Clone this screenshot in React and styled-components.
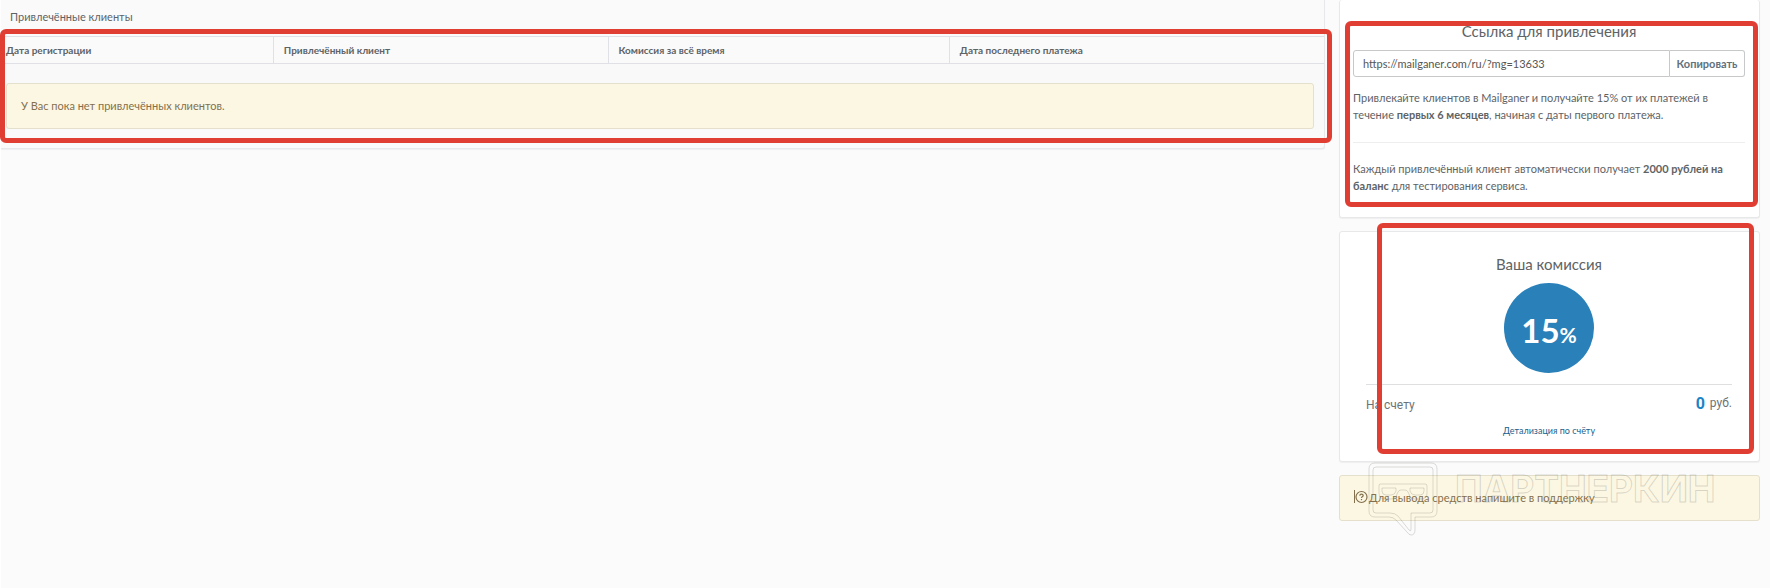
import React from 'react';
import styled, { createGlobalStyle } from 'styled-components';

const GlobalStyle = createGlobalStyle`
  * {
    box-sizing: border-box;
  }

  body {
    margin: 0;
    background: #fbfbfb;
    color: #5e6366;
    font-family: Lato, 'Noto Sans', sans-serif;
    font-size: 11px;
    line-height: 17px;
  }
`

const Page = styled.div`
  display: flex;
  align-items: flex-start;
  gap: 14px;
  min-height: 100vh;
  padding-right: 10px;
  border-left: 1px solid #ffffff;
`

const Clients = styled.section`
  position: relative;
  flex: 1;
  min-width: 0;
  padding-bottom: 19px;
  background: #fafafa;
  border: 1px solid #e7e8ec;
  border-width: 0 1px 1px 0;
  border-radius: 0 0 3px 0;
  box-shadow: 0 1px 1px #efeff1;
`

const ClientsTitle = styled.h2`
  margin: 0;
  padding: 8px 9px 11px;
  font-size: 11px;
  font-weight: 400;
  line-height: 17px;
`

const Table = styled.table`
  width: 100%;
  table-layout: fixed;
  border-collapse: separate;
  border-spacing: 0;
  border-top: 1px solid #dfe1e6;
`

const HeadCell = styled.th`
  width: ${props => props.$width};
  height: 27px;
  padding: 0 10px;
  border: 1px solid #dfe1e6;
  border-width: 0 1px 1px 0;
  font-size: 10px;
  font-weight: 700;
  line-height: 16px;
  text-align: left;
  white-space: nowrap;

  &:first-child {
    padding-left: 5px;
  }

  &:last-child {
    border-right: 0;
  }
`

const EmptyCell = styled.td`
  padding: 19px 10px 0 5px;
  background: #f9f9f9;
`

const Notice = styled.div`
  display: flex;
  align-items: center;
  gap: 1px;
  height: 46px;
  padding: 0 14px 2px;
  background: #fcf7e3;
  border: 1px solid #e4e0cb;
  border-radius: 3px;
  color: #84704c;
`

const Sidebar = styled.aside`
  position: relative;
  display: flex;
  flex-direction: column;
  gap: 13px;
  width: 421px;
`

const Card = styled.section`
  position: relative;
  padding: ${props => props.$padding};
  background: #ffffff;
  border: 1px solid #e7e8e9;
  border-top-width: ${props => (props.$cut ? 0 : 1)}px;
  border-radius: 3px;
  box-shadow: 0 1px 1px #efefef;
`

const CardTitle = styled.h3`
  margin: 0 0 8px;
  font-size: 15px;
  font-weight: 400;
  line-height: 22px;
  text-align: center;
`

const CopyRow = styled.div`
  display: flex;
  height: 27px;
  margin-bottom: 12px;
`

const LinkInput = styled.input`
  flex: 1;
  min-width: 0;
  padding: 0 9px;
  background: #ffffff;
  border: 1px solid #c6c8ca;
  border-radius: 3px 0 0 3px;
  color: #555555;
  font: inherit;
`

const CopyButton = styled.button`
  width: 75px;
  padding: 0;
  background: #ffffff;
  border: 1px solid #c6c8ca;
  border-left: 0;
  border-radius: 0 3px 3px 0;
  color: #62717c;
  font: inherit;
  font-weight: 700;
`

const Text = styled.p`
  margin: 0;
`

const Rule = styled.hr`
  margin: ${props => props.$margin};
  border: 0;
  border-top: 1px solid ${props => props.$color};
`

const Percent = styled.div`
  display: flex;
  align-items: baseline;
  justify-content: center;
  width: 90px;
  height: 90px;
  margin: 0 auto;
  background: #2a80b9;
  border-radius: 50%;
  color: #ffffff;
  font-size: 33px;
  font-weight: 700;
  line-height: 94px;

  small {
    font-size: 21px;
  }
`

const Balance = styled.div`
  display: flex;
  justify-content: space-between;
  height: 22px;
  color: #6d7275;
  font-family: Roboto, sans-serif;
  font-size: 12px;
  line-height: 20px;
`

const Amount = styled.span`
  display: flex;
  gap: 5px;
  line-height: 17px;

  strong {
    color: #1c84c6;
    font-size: 16px;
  }
`

const Details = styled.a`
  display: block;
  margin-top: 7px;
  color: #1d5f8a;
  font-size: 9px;
  line-height: 14px;
  text-align: center;
  text-decoration: none;
`

const Frame = styled.div`
  position: absolute;
  inset: ${props => props.$inset};
  border: 5px solid #e03e33;
  border-radius: 6px;
  pointer-events: none;
`

const Watermark = styled.div`
  position: absolute;
  bottom: -16px;
  left: 29px;
  display: flex;
  gap: 17px;
  color: transparent;
  font-family: Inter, sans-serif;
  font-size: 37px;
  font-weight: 700;
  line-height: 53px;
  -webkit-text-stroke: 1px rgba(110, 110, 100, 0.26);
  pointer-events: none;
`

function HelpIcon() {
  return (
    <svg width="14" height="14" viewBox="0 0 14 14" fill="none" stroke="#84704c">
      <path d="M.5 0v13" />
      <circle cx="7.500" cy="7" r="5.500" strokeWidth="1.200" />
      <path d="M5.800 5.800c0-2.200 3.400-2.100 3.400-.2 0 1.300-1.700 1.200-1.700 2.300" strokeWidth="1.200" />
      <path d="M7.500 9v1.200" strokeWidth="1.200" />
    </svg>
  );
}

function BubbleLogo() {
  return (
    <svg width="70" height="75" viewBox="0 0 70 75" fill="none" stroke="rgba(110,110,100,.24)">
      <path d="M7 1h56q6 0 6 6v42q0 6-6 6H47v13q0 5-4 5-2 0-4-3L28 58q-3-3-7-3H7q-6 0-6-6V7q0-6 6-6z" />
      <path d="M8 5h54q3 0 3 3v40q0 3-3 3H43v16q0 3-2 1L30 54q-3-3-8-3H8q-3 0-3-3V8q0-3 3-3z" />
      <path d="M12 22h45q2 0 2 2v7q0 6-6 6h-6q-5 0-6-5l-1-2q-1-2-3-2h-4q-2 0-3 2l-1 2q-1 5-6 5h-6q-6 0-6-6v-7q0-2 1-2z" />
      <path d="M14 26h14v3q-1 4-5 4h-5q-4 0-4-4zM42 26h14v3q0 4-4 4h-5q-4 0-5-4z" />
    </svg>
  );
}

const columns = [
  { title: 'Дата регистрации', width: '20.62%' },
  { title: 'Привлечённый клиент', width: '25.3%' },
  { title: 'Комиссия за всё время', width: '25.8%' },
  { title: 'Дата последнего платежа', width: '28.28%' },
];

function ClientsPanel() {
  return (
    <Clients>
      <ClientsTitle>Привлечённые клиенты</ClientsTitle>
      <Table>
        <thead>
          <tr>
            {columns.map(column => (
              <HeadCell key={column.title} $width={column.width}>{column.title}</HeadCell>
            ))}
          </tr>
        </thead>
        <tbody>
          <tr>
            <EmptyCell colSpan={4}>
              <Notice>У Вас пока нет привлечённых клиентов.</Notice>
            </EmptyCell>
          </tr>
        </tbody>
      </Table>
      <Frame $inset="29px -8px 5px -1px" />
    </Clients>
  );
}

function ReferralCard() {
  return (
    <Card $cut $padding="20px 14px 23px 13px">
      <CardTitle>
        <label htmlFor="referral-link">Ссылка для привлечения</label>
      </CardTitle>
      <CopyRow>
        <LinkInput id="referral-link" readOnly value="https://mailganer.com/ru/?mg=13633" />
        <CopyButton type="button">Копировать</CopyButton>
      </CopyRow>
      <Text>
        Привлекайте клиентов в Mailganer и получайте 15% от их платежей в
        течение <b>первых 6 месяцев</b>, начиная с даты первого платежа.
      </Text>
      <Rule $margin="19px 0 17px" $color="#eeeeee" />
      <Text>
        Каждый привлечённый клиент автоматически получает <b>2000 рублей на
        баланс</b> для тестирования сервиса.
      </Text>
      <Frame $inset="21px 1px 10px 5px" />
    </Card>
  );
}

function CommissionCard() {
  return (
    <Card $padding="21px 27px 23px 26px">
      <CardTitle>Ваша комиссия</CardTitle>
      <Percent>15<small>%</small></Percent>
      <Rule $margin="11px 0 10px" $color="#dddfe1" />
      <Balance>
        <span>На счету</span>
        <Amount><strong>0</strong> руб.</Amount>
      </Balance>
      <Details href="#details">Детализация по счёту</Details>
      <Frame $inset="-9px 5px 7px 37px" />
    </Card>
  );
}

export default function App() {
  return (
    <>
      <GlobalStyle />
      <Page>
        <ClientsPanel />
        <Sidebar>
          <ReferralCard />
          <CommissionCard />
          <Notice>
            <HelpIcon />
            Для вывода средств напишите в поддержку
          </Notice>
          <Watermark>
            <BubbleLogo />
            ПАРТНЕРКИН
          </Watermark>
        </Sidebar>
      </Page>
    </>
  );
}
